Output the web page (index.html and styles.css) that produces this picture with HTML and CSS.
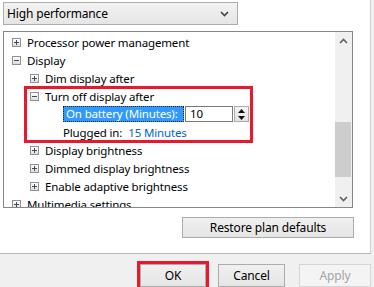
FILE: index.html
```html
<!DOCTYPE html>
<html lang="en">

<head>
    <meta charset="utf-8">
    <title>Power Options - Advanced settings</title>
    <link rel="stylesheet" href="styles.css">
</head>

<body>
    <section class="tab">
        <div class="plan">
            <span>High performance</span>
            <svg class="chev" width="9" height="6" viewBox="0 0 9 6"><polyline points="1,1 4.5,4.5 8,1" fill="none" stroke="#444" stroke-width="1.6"/></svg>
        </div>

        <div class="tree">
            <div class="rows">
                <div class="row lvl1"><span class="box plus"></span>Processor power management</div>
                <div class="row lvl1"><span class="box minus"></span>Display</div>
                <div class="row lvl2"><span class="box plus"></span>Dim display after</div>
                <div class="row lvl2"><span class="box minus"></span>Turn off display after</div>
                <div class="row lvl3">
                    <span class="sel">On battery (Minutes):</span>
                    <span class="num">10</span>
                    <span class="spin">
                        <svg width="7" height="4" viewBox="0 0 7 4"><polygon points="0,4 3.5,0 7,4" fill="#111"/></svg>
                        <svg width="7" height="4" viewBox="0 0 7 4"><polygon points="0,0 3.5,4 7,0" fill="#111"/></svg>
                    </span>
                </div>
                <div class="row lvl3">Plugged in: <a class="link">15 Minutes</a></div>
                <div class="row lvl2"><span class="box plus"></span>Display brightness</div>
                <div class="row lvl2"><span class="box plus"></span>Dimmed display brightness</div>
                <div class="row lvl2"><span class="box plus"></span>Enable adaptive brightness</div>
                <div class="row lvl1"><span class="box plus"></span>Multimedia settings</div>
            </div>

            <div class="scroll">
                <div class="sbtn">
                    <svg width="9" height="6" viewBox="0 0 9 6"><polyline points="1,5 4.5,1.5 8,5" fill="none" stroke="#606060" stroke-width="1.6"/></svg>
                </div>
                <div class="track"><div class="thumb"></div></div>
                <div class="sbtn">
                    <svg width="9" height="6" viewBox="0 0 9 6"><polyline points="1,1 4.5,4.5 8,1" fill="none" stroke="#606060" stroke-width="1.6"/></svg>
                </div>
            </div>

            <div class="mark"></div>
        </div>

        <div class="restore-row">
            <button class="btn restore">Restore plan defaults</button>
        </div>
    </section>

    <footer class="actions">
        <button class="btn ok">OK</button>
        <button class="btn cancel">Cancel</button>
        <button class="btn apply" disabled>Apply</button>
    </footer>
</body>

</html>
```

FILE: styles.css
```css
* {
    box-sizing: border-box;
}

body {
    margin: 0;
    width: 374px;
    height: 287px;
    overflow: hidden;
    background-color: #f0f0f0;
    font-family: 'Noto Sans', 'Open Sans', sans-serif;
    font-size: 11.5px;
    letter-spacing: -0.15px;
    color: #000;
}

.tab {
    width: 371px;
    height: 254px;
    padding: 2px 0 0 3px;
    background-color: #fff;
    border-right: 1px solid #d0d0d0;
    border-bottom: 1px solid #b4b4b4;
}

.plan {
    width: 235px;
    height: 23px;
    padding: 0 8px 0 3px;
    display: flex;
    align-items: center;
    justify-content: space-between;
    font-size: 12px;
    border: 1px solid #acacac;
    background: linear-gradient(#f2f2f2, #e6e6e6);
}

/* tree list */

.tree {
    position: relative;
    margin-top: 6px;
    width: 350px;
    height: 177px;
    display: flex;
    border: 1px solid #828790;
    background-color: #fff;
}

.rows {
    flex: 1;
    overflow: hidden;
    padding-top: 1px;
}

.row {
    height: 18px;
    display: flex;
    align-items: center;
    white-space: nowrap;
}

.lvl1 {
    padding-left: 8px;
}

.lvl2 {
    padding-left: 26px;
}

.lvl3 {
    padding-left: 59px;
}

.box {
    position: relative;
    flex: none;
    width: 9px;
    height: 9px;
    margin-right: 6px;
    border: 1px solid #919191;
    background: linear-gradient(#fff, #dedede);
}

.box::before,
.box::after {
    content: "";
    position: absolute;
    background-color: #3b4a5c;
}

.box::before {
    left: 1px;
    top: 3px;
    width: 5px;
    height: 1px;
}

.plus::after {
    left: 3px;
    top: 1px;
    width: 1px;
    height: 5px;
}

.sel {
    width: 121px;
    height: 16px;
    line-height: 14px;
    padding: 0 2px;
    color: #fff;
    background-color: #3399ff;
    border: 1px dotted #222;
}

.num {
    width: 48px;
    height: 16px;
    line-height: 14px;
    margin-left: 1px;
    padding-left: 4px;
    border: 1px solid #7a7a7a;
}

.spin {
    width: 15px;
    height: 16px;
    margin-left: 1px;
    display: flex;
    flex-direction: column;
    align-items: center;
    justify-content: space-around;
    border: 1px solid #acacac;
    background: linear-gradient(#f4f4f4, #e2e2e2);
}

.link {
    margin-left: 6px;
    color: #0066cc;
}

.scroll {
    width: 17px;
    display: flex;
    flex-direction: column;
    background-color: #f0f0f0;
}

.sbtn {
    height: 17px;
    display: flex;
    align-items: center;
    justify-content: center;
}

.track {
    flex: 1;
    padding-top: 73px;
}

.thumb {
    height: 55px;
    margin: 0 1px 0 0;
    background-color: #cdcdcd;
}

.mark {
    position: absolute;
    left: 20px;
    top: 54px;
    width: 229px;
    height: 57px;
    border: 3px solid #e8192c;
}

/* buttons */

.restore-row {
    display: flex;
    justify-content: flex-end;
    padding-right: 16px;
    margin-top: 9px;
}

.btn {
    height: 23px;
    padding: 0;
    font-family: inherit;
    font-size: 12px;
    letter-spacing: -0.15px;
    color: #000;
    border: 1px solid #acacac;
    background: linear-gradient(#f0f0f0, #e5e5e5);
}

.restore {
    width: 172px;
    height: 21px;
}

.actions {
    display: flex;
    padding: 10px 0 0 140px;
}

.ok {
    width: 66px;
    outline: 3px solid #e8192c;
}

.cancel {
    width: 67px;
    margin-left: 12px;
}

.apply {
    width: 72px;
    margin-left: 14px;
    color: #a3a3a3;
    border-color: #d5d5d5;
    background: #f4f4f4;
}
```
